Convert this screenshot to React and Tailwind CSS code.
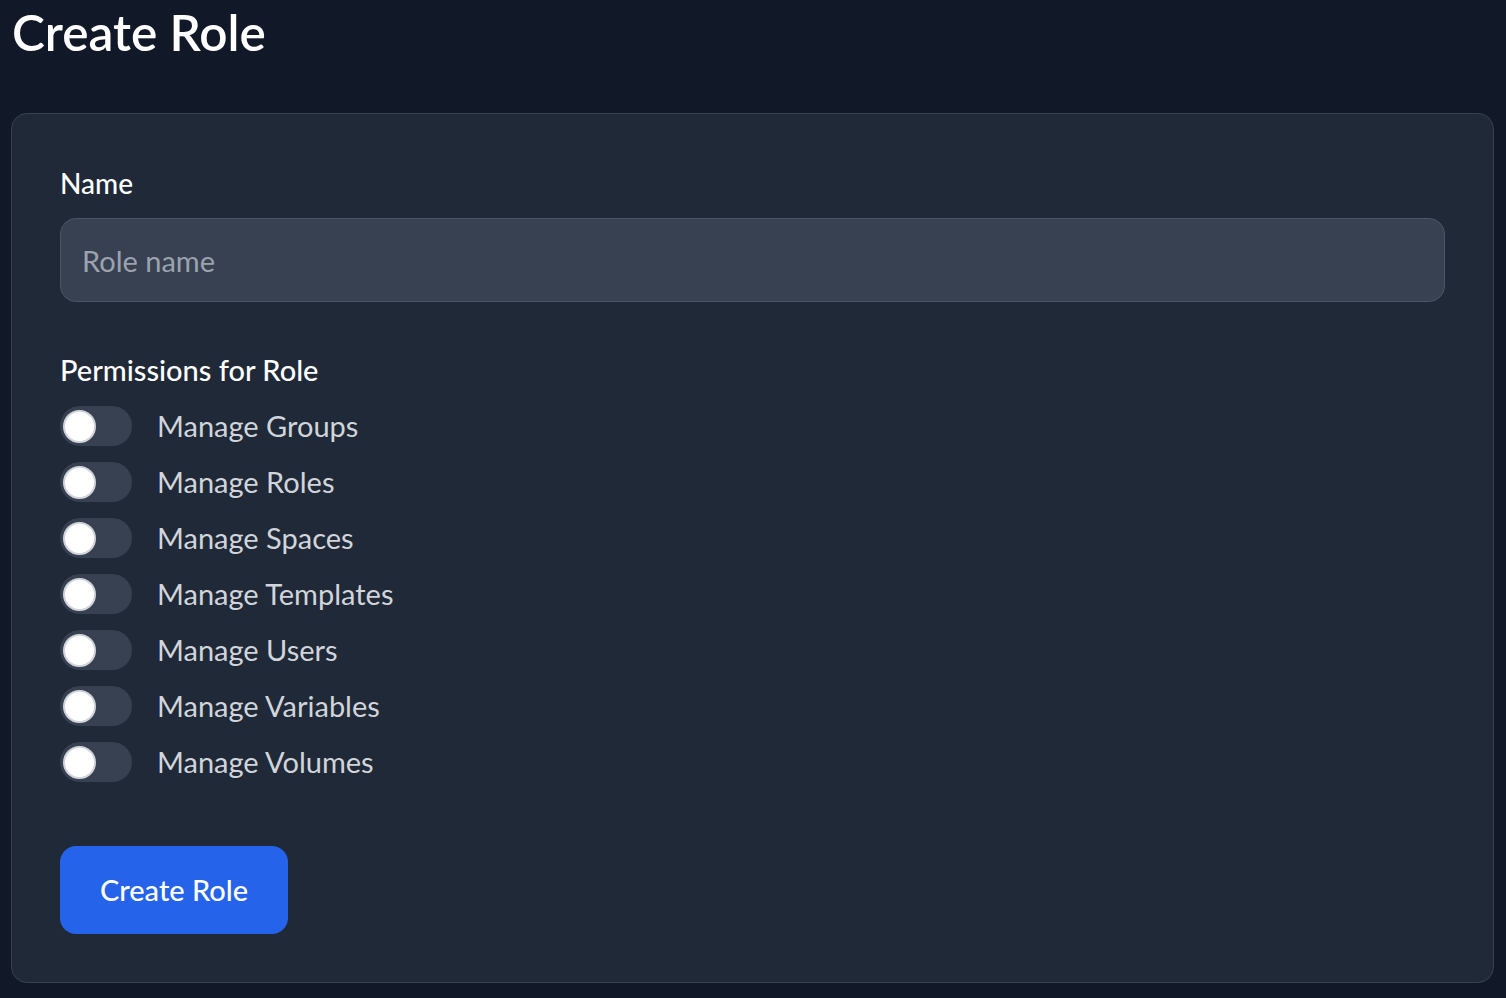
import React from "react";

const perms = [
  "Manage Groups",
  "Manage Roles",
  "Manage Spaces",
  "Manage Templates",
  "Manage Users",
  "Manage Variables",
  "Manage Volumes",
];

function Toggle() {
  return (
    <div className="relative w-[72px] h-[40px] rounded-full bg-[#374151] shrink-0">
      <div className="absolute left-[3px] top-[4px] w-[33px] h-[33px] rounded-full bg-white border-2 border-[#d1d5db]" />
    </div>
  );
}

export default function App() {
  return (
    <div
      className="min-h-[998px] bg-[#111827] pl-[11px] pr-[12px] pb-[16px]"
      style={{ fontFamily: "Lato, 'Open Sans', sans-serif" }}
    >
      <h1 className="text-[49.5px] leading-[64px] font-semibold text-white pl-[1px] mb-[49px]">
        Create Role
      </h1>
      <div className="bg-[#1f2937] border border-[#374151] rounded-[16px] px-[48px] pt-[49px] pb-[48px]">
        <label className="block text-[28px] leading-[40px] text-white font-medium mb-[15px]">
          Name
        </label>
        <input
          type="text"
          placeholder="Role name"
          className="w-full h-[84px] bg-[#374151] border border-[#4b5563] rounded-[16px] px-[21px] text-[29px] text-white placeholder-[#9ca3af] outline-none"
        />
        <div className="mt-[48px] text-[29px] leading-[40px] text-white font-medium">
          Permissions for Role
        </div>
        <div className="mt-[16px] flex flex-col gap-[16px]">
          {perms.map((p) => (
            <div key={p} className="flex items-center">
              <Toggle />
              <span className="ml-[25px] text-[29px] leading-[40px] text-[#d1d5db]">{p}</span>
            </div>
          ))}
        </div>
        <button className="mt-[64px] w-[228px] h-[88px] bg-[#2563eb] rounded-[16px] text-white text-[29px] font-medium">
          Create Role
        </button>
      </div>
    </div>
  );
}
